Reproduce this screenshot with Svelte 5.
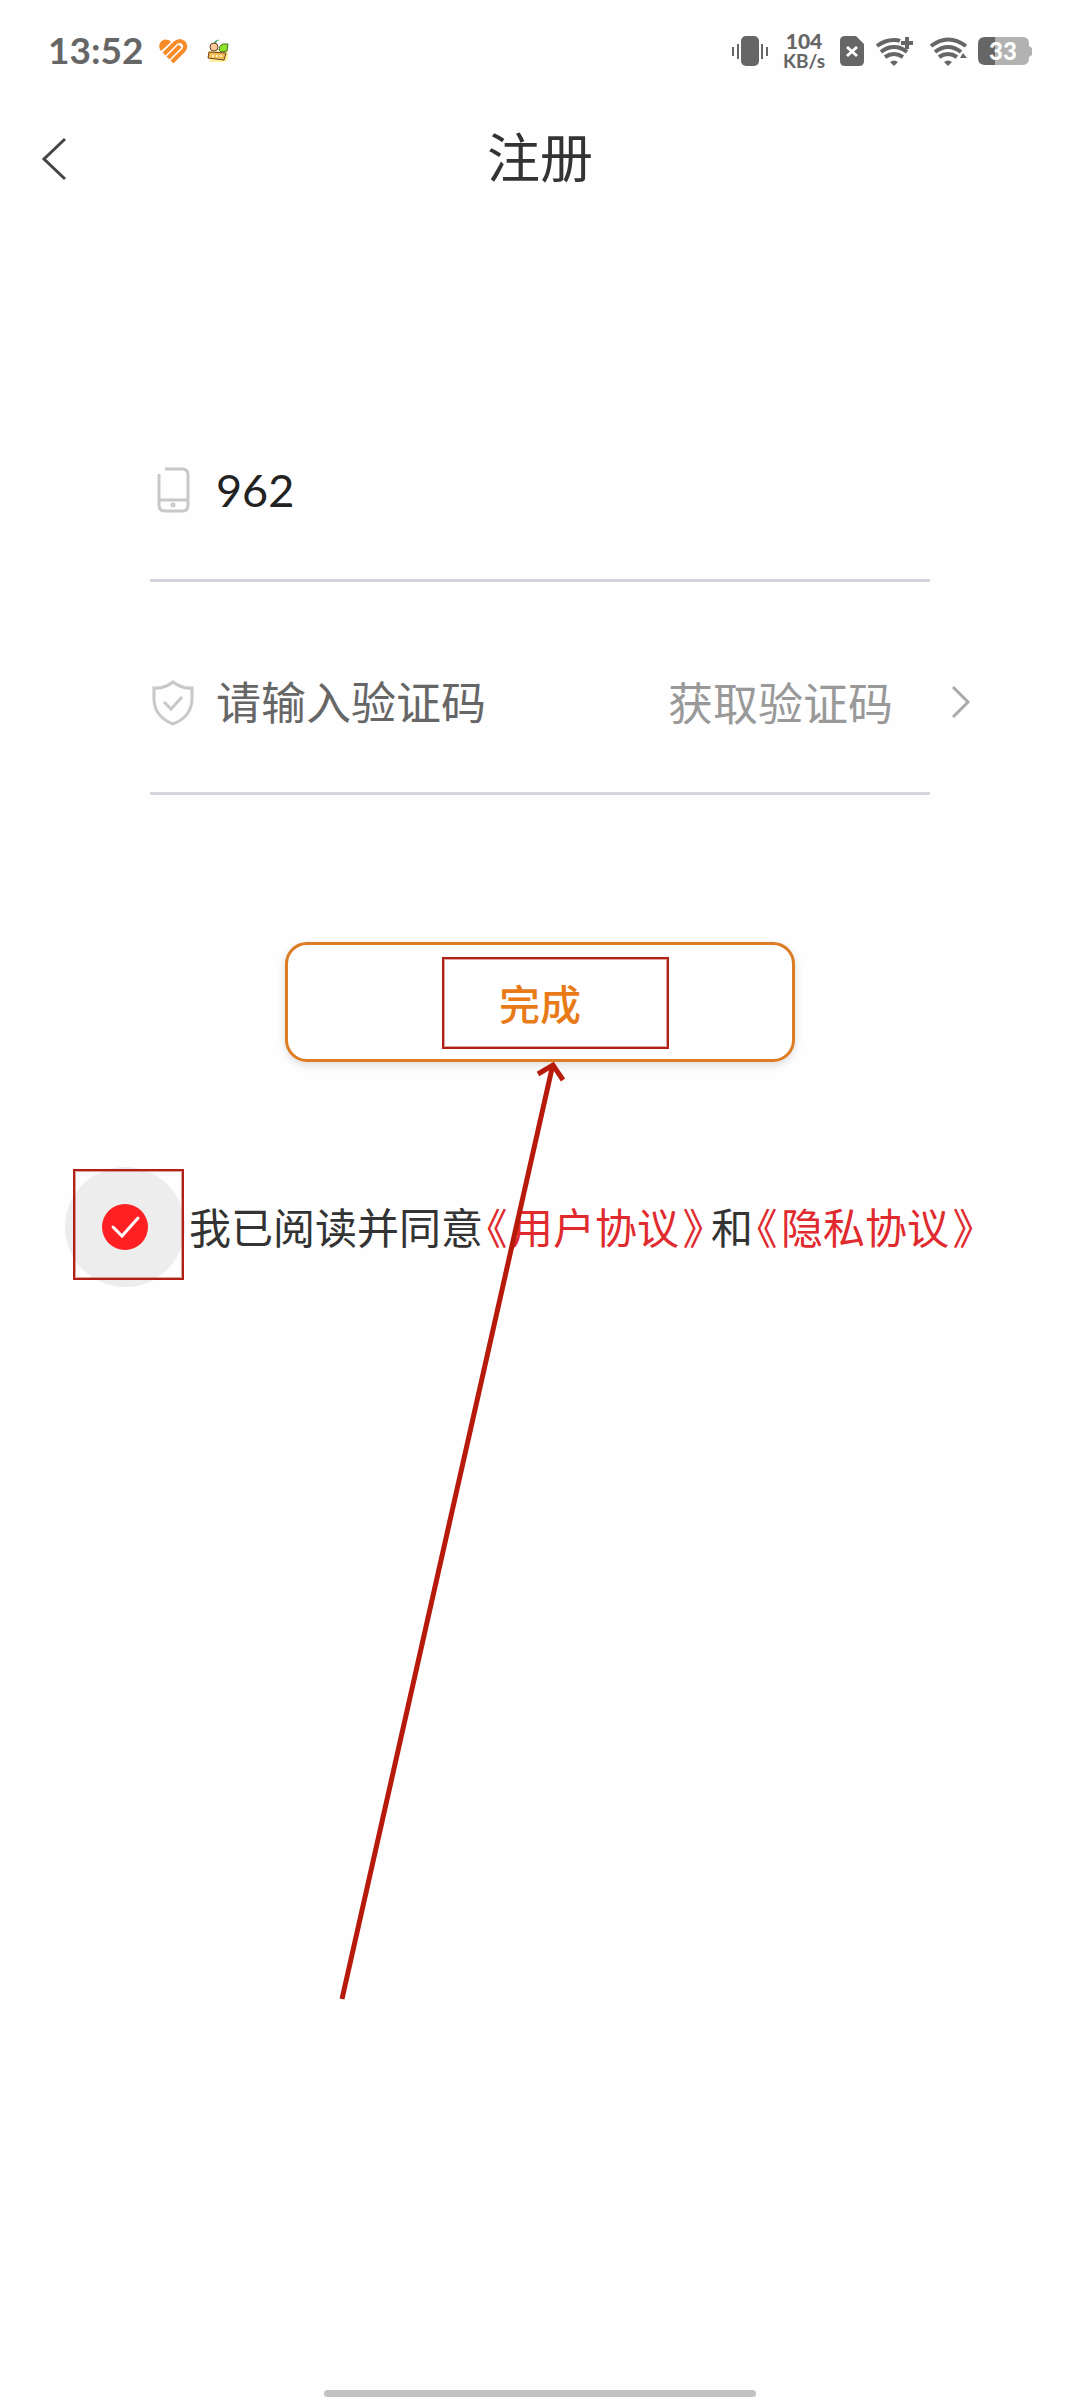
<script>
  let phone = $state('962');
  let code = $state('');
  let agreed = $state(true);
</script>

<div class="screen">
  <header class="status">
    <span class="time">13:52</span>
    <svg class="heart" width="28" height="24" viewBox="0 0 28 24">
      <path class="lobe" d="M2 12Q-1 8 1 4 4-1 9 1q2 0 3 2z" />
      <path d="M5 15 16 4q5-4 9 0 3 4-1 8L13 23" />
      <path d="m9 19 12-12" />
    </svg>
    <svg class="game" width="22" height="22" viewBox="0 0 22 22">
      <path d="M1 11h20v8l-3 3H3z" fill="#fff0a0" />
      <path d="M13 6q2-3 8-2l-1 7-6 1-2-2z" fill="#8de52b" stroke="#507020" />
      <circle cx="7" cy="7" r="4" fill="#ffc99b" stroke="#69412b" />
      <path d="M7 3q2-4 6-3-3 0-4 3" fill="#379d59" />
      <path d="m2 12 17 1-2 7-16-2z" fill="#f5bd55" stroke="#6b4217" />
      <path d="M5 16h2m2 0h2m2 0h2" stroke="#fff3c8" stroke-width="2" />
    </svg>

    <div class="indicators">
      <svg width="36" height="30" viewBox="0 0 36 30">
        <rect x="9" width="18" height="30" rx="5" />
        <path d="M0 11h2v9H0zM5 8h2v15H5zM29 8h2v15h-2zM34 11h2v9h-2z" />
      </svg>
      <div class="speed"><b>104</b><span>KB/s</span></div>
      <svg width="24" height="30" viewBox="0 0 24 30">
        <path d="M5 0h11l8 8v17q0 5-5 5H5q-5 0-5-5V5q0-5 5-5z" />
        <path class="cross" d="m7 11 10 9m0-9-10 9" />
      </svg>
      <svg class="wifi" width="37" height="29" viewBox="0 0 37 29">
        <path class="arc" d="M1 9Q9 3 18 3q4 0 6 1M5 15q6-5 13-5t13 5M9 20q9-6 18 0" />
        <path d="M14 25q4-3 8 0l-4 4z" />
        <path class="plus" d="M31 0v12m-6-6h12" />
      </svg>
      <svg class="wifi second" width="37" height="29" viewBox="0 0 37 29">
        <path class="arc" d="M1 9q17-13 35 0M5 15q13-10 26 0M9 20q9-6 18 0" />
        <path d="M14 25q4-3 8 0l-4 4zM30 21l3-5 4 5z" />
      </svg>
      <svg class="battery" width="54" height="28" viewBox="0 0 54 28">
        <path fill="#b2b2b2" d="M7 0h38q6 0 6 7v2l3 2v7l-3 2v1q0 7-6 7H7z" />
        <path d="M17 0H7Q0 0 0 7v14q0 7 7 7h10z" />
        <text x="25" y="23">33</text>
      </svg>
    </div>
  </header>

  <nav>
    <button class="back" aria-label="返回">
      <svg width="24" height="42" viewBox="0 0 24 42"><path d="M23 1 2 21l21 20" /></svg>
    </button>
    <h1>注册</h1>
  </nav>

  <main>
    <form onsubmit={(e) => e.preventDefault()}>
      <div class="field">
        <label for="phone" aria-label="手机号">
          <svg width="40" height="46" viewBox="0 0 40 46">
            <path d="M6 7v31q0 6 6 6h17q6 0 6-6V8q0-6-6-6H12M6 33h29" />
            <circle cx="20" cy="38" r="1" />
          </svg>
        </label>
        <input id="phone" type="tel" bind:value={phone} />
      </div>
      <div class="field">
        <label for="code" aria-label="验证码">
          <svg width="40" height="46" viewBox="0 0 40 46">
            <path d="M20 2Q29 9 39 8v12Q38 37 20 44 2 37 1 20V8Q11 9 20 2z" />
            <path d="m11 22 7 7 11-12" />
          </svg>
        </label>
        <input id="code" type="text" placeholder="请输入验证码" bind:value={code} />
        <button type="button" class="get-code">
          获取验证码
          <svg width="18" height="32" viewBox="0 0 18 32"><path d="m1 1 15 15L1 31" /></svg>
        </button>
      </div>
      <button class="submit">
        完成
        <span class="mark-box"></span>
      </button>
    </form>

    <div class="agreement">
      <label class="check">
        <input type="checkbox" bind:checked={agreed} aria-label="我已阅读并同意" />
        {#if agreed}
          <svg width="46" height="46" viewBox="0 0 46 46">
            <circle cx="23" cy="23" r="23" />
            <path d="m11 23 9 9 16-18" />
          </svg>
        {/if}
        <span class="mark-box"></span>
      </label>
      <p>
        我已阅读并同意<a href="#user"><i>《</i>用户协议<i>》</i></a><span class="and">和</span><a href="#privacy"><i>《</i>隐私协议<i>》</i></a>
      </p>
    </div>
  </main>

  <svg class="arrow" width="240" height="950" viewBox="0 0 240 950">
    <path d="M12 939 223 4M208 14l15-9 10 15" />
  </svg>

  <div class="home-bar"></div>
</div>

<style>
:global(body) {
  margin: 0;
  background: #fefefe;
}
.screen {
  position: relative;
  display: flex;
  flex-direction: column;
  min-height: 100vh;
  font-family: Lato, "Noto Sans CJK SC", sans-serif;
  color: #333;
}
button {
  padding: 0;
  border: 0;
  background: none;
  font: inherit;
}
svg {
  display: block;
  flex: none;
  overflow: visible;
}

/* status bar */
.status {
  display: flex;
  align-items: center;
  height: 102px;
  padding: 0 48px;
  color: #666;
  fill: #666;
}
.time {
  font-size: 37px;
  line-height: 40px;
  padding-bottom: 2px;
  font-weight: 700;
}
.heart {
  margin-left: 16px;
  fill: none;
  stroke: #f68b28;
  stroke-width: 4;
}
.heart .lobe {
  fill: #f68b28;
  stroke: none;
}
.game {
  margin-left: 20px;
}
.indicators {
  display: flex;
  align-items: center;
  margin-left: auto;
}
.speed {
  display: flex;
  flex-direction: column;
  width: 44px;
  margin: 0 14px;
  font-size: 19px;
  line-height: 20px;
  font-weight: 700;
  text-align: center;
}
.speed b {
  font-size: 21px;
}
.cross {
  fill: none;
  stroke: #fff;
  stroke-width: 3;
}
.wifi {
  margin-left: 12px;
}
.wifi.second {
  margin-left: 17px;
}
.arc,
.plus {
  fill: none;
  stroke: #666;
  stroke-width: 4;
}
.battery {
  margin-left: 11px;
}
.battery text {
  fill: #fff;
  font-size: 24px;
  font-weight: 900;
  text-anchor: middle;
}

/* title bar */
nav {
  display: grid;
  grid-template-columns: 1fr auto 1fr;
  align-items: center;
  height: 114px;
  padding: 0 42px;
}
.back path {
  fill: none;
  stroke: #444;
  stroke-width: 3;
}
h1 {
  margin: 0;
  padding-bottom: 2px;
  font-size: 53px;
  line-height: 60px;
  font-weight: 400;
}

/* form */
main {
  flex: 1;
}
form {
  padding: 153px 150px 0;
}
.field {
  display: flex;
  align-items: center;
  box-sizing: border-box;
  height: 213px;
  padding-top: 32px;
  border-bottom: 3px solid #d3d6dc;
}
.field svg {
  width: 40px;
  fill: none;
  stroke: #c8c8c8;
  stroke-width: 3;
}
.field label {
  padding: 0 23px 0 3px;
}
.field input {
  flex: 1;
  min-width: 0;
  padding: 0;
  border: 0;
  outline: 0;
  background: none;
  color: #222;
  font-family: inherit;
  font-size: 45px;
}
.field input::placeholder {
  color: #666;
  opacity: 1;
}
.get-code {
  display: flex;
  align-items: center;
  gap: 59px;
  margin-right: -40px;
  padding-bottom: 3px;
  color: #999;
  font-size: 45px;
}
.get-code svg {
  width: 18px;
  stroke: #aaa;
}
.submit {
  position: relative;
  display: block;
  width: 510px;
  height: 120px;
  margin: 147px auto 0;
  border: 3px solid #dc7c24;
  border-radius: 22px;
  background: #fff;
  box-shadow: 0 3px 9px #0002;
  color: #e87b17;
  font-size: 41px;
  font-weight: 500;
}

/* agreement */
.agreement {
  display: flex;
  align-items: center;
  margin-top: 105px;
  padding-left: 65px;
}
.check {
  position: relative;
  display: grid;
  place-items: center;
  width: 120px;
  height: 120px;
  border-radius: 50%;
  background: #ededed;
}
.check input {
  position: absolute;
  opacity: 0;
}
.check circle {
  fill: #ff2023;
}
.check path {
  fill: none;
  stroke: #fff;
  stroke-width: 3;
  stroke-linecap: round;
}
p {
  margin: 0 0 0 4px;
  padding-bottom: 3px;
  font-size: 42px;
  white-space: nowrap;
}
a {
  color: #e02a2e;
  text-decoration: none;
}
i {
  display: inline-block;
  width: 28px;
  font-style: normal;
  font-feature-settings: "halt";
  text-align: center;
}
.and {
  margin-left: 4px;
}

/* red annotations */
.mark-box {
  position: absolute;
  border: 2px solid #b02015;
  box-shadow: inset 0 0 0 1px #b0201566;
}
.submit .mark-box {
  inset: 12px 123px 10px 154px;
}
.check .mark-box {
  inset: 2px 1px 7px 8px;
}
.arrow {
  position: absolute;
  top: 1060px;
  left: 330px;
  fill: none;
  stroke: #b71a0b;
  stroke-width: 5;
}
.home-bar {
  width: 40%;
  height: 7px;
  margin: 0 auto 3px;
  border-radius: 4px;
  background: #c2c2c2;
}
</style>
